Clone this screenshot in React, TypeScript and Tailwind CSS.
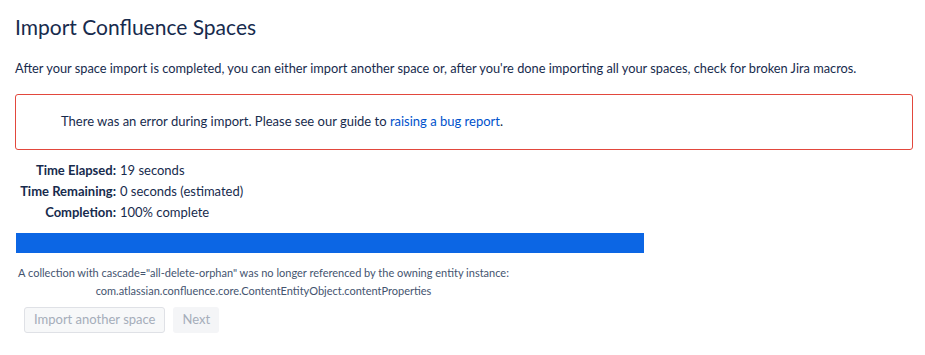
const stats = [
  { label: "Time Elapsed:", value: "19 seconds" },
  { label: "Time Remaining:", value: "0 seconds (estimated)" },
  { label: "Completion:", value: "100% complete" },
];

const App = () => {
  return (
    <div className="min-h-screen bg-white pl-[15px] pr-[12px] pt-[13px] text-[#172b4d] font-['Lato',sans-serif] text-[13px]">
      <h2 className="text-[21px] leading-[28px]">Import Confluence Spaces</h2>
      <p className="mt-[17px] leading-[20px] whitespace-nowrap text-[12.8px]">
        After your space import is completed, you can either import another
        space or, after you're done importing all your spaces, check for broken
        Jira macros.
      </p>
      <div className="mt-[16px] h-[56px] rounded-[3px] border border-[#e2483d] pl-[45px] flex items-center">
        <span>
          There was an error during import. Please see our guide to{" "}
          <a href="#" className="text-[#0052cc]">
            raising a bug report
          </a>
          .
        </span>
      </div>
      <div className="mt-[10px] grid grid-cols-[101px_1fr] gap-x-[4px] w-fit leading-[21px]">
        {stats.map((s) => (
          <div key={s.label} className="contents">
            <span className="text-right font-bold whitespace-nowrap">{s.label}</span>
            <span>{s.value}</span>
          </div>
        ))}
      </div>
      <div className="mt-[10px] ml-px h-[20px] w-[628px] bg-[#0c66e4]" />
      <div className="mt-[11px] w-[497px] text-center text-[11px] leading-[18px] text-[#44546f]">
        <div className="whitespace-nowrap">
          A collection with cascade="all-delete-orphan" was no longer referenced
          by the owning entity instance:
        </div>
        <div>com.atlassian.confluence.core.ContentEntityObject.contentProperties</div>
      </div>
      <div className="mt-[7px] ml-[9px] flex gap-[8px]">
        <button className="h-[26px] px-[9px] rounded-[3px] border border-[#dfe1e6] bg-[#f7f8f9] text-[#a5adba]">
          Import another space
        </button>
        <button className="h-[26px] px-[9px] rounded-[3px] bg-[#f4f5f7] text-[#a5adba]">
          Next
        </button>
      </div>
    </div>
  );
};

export default App;
